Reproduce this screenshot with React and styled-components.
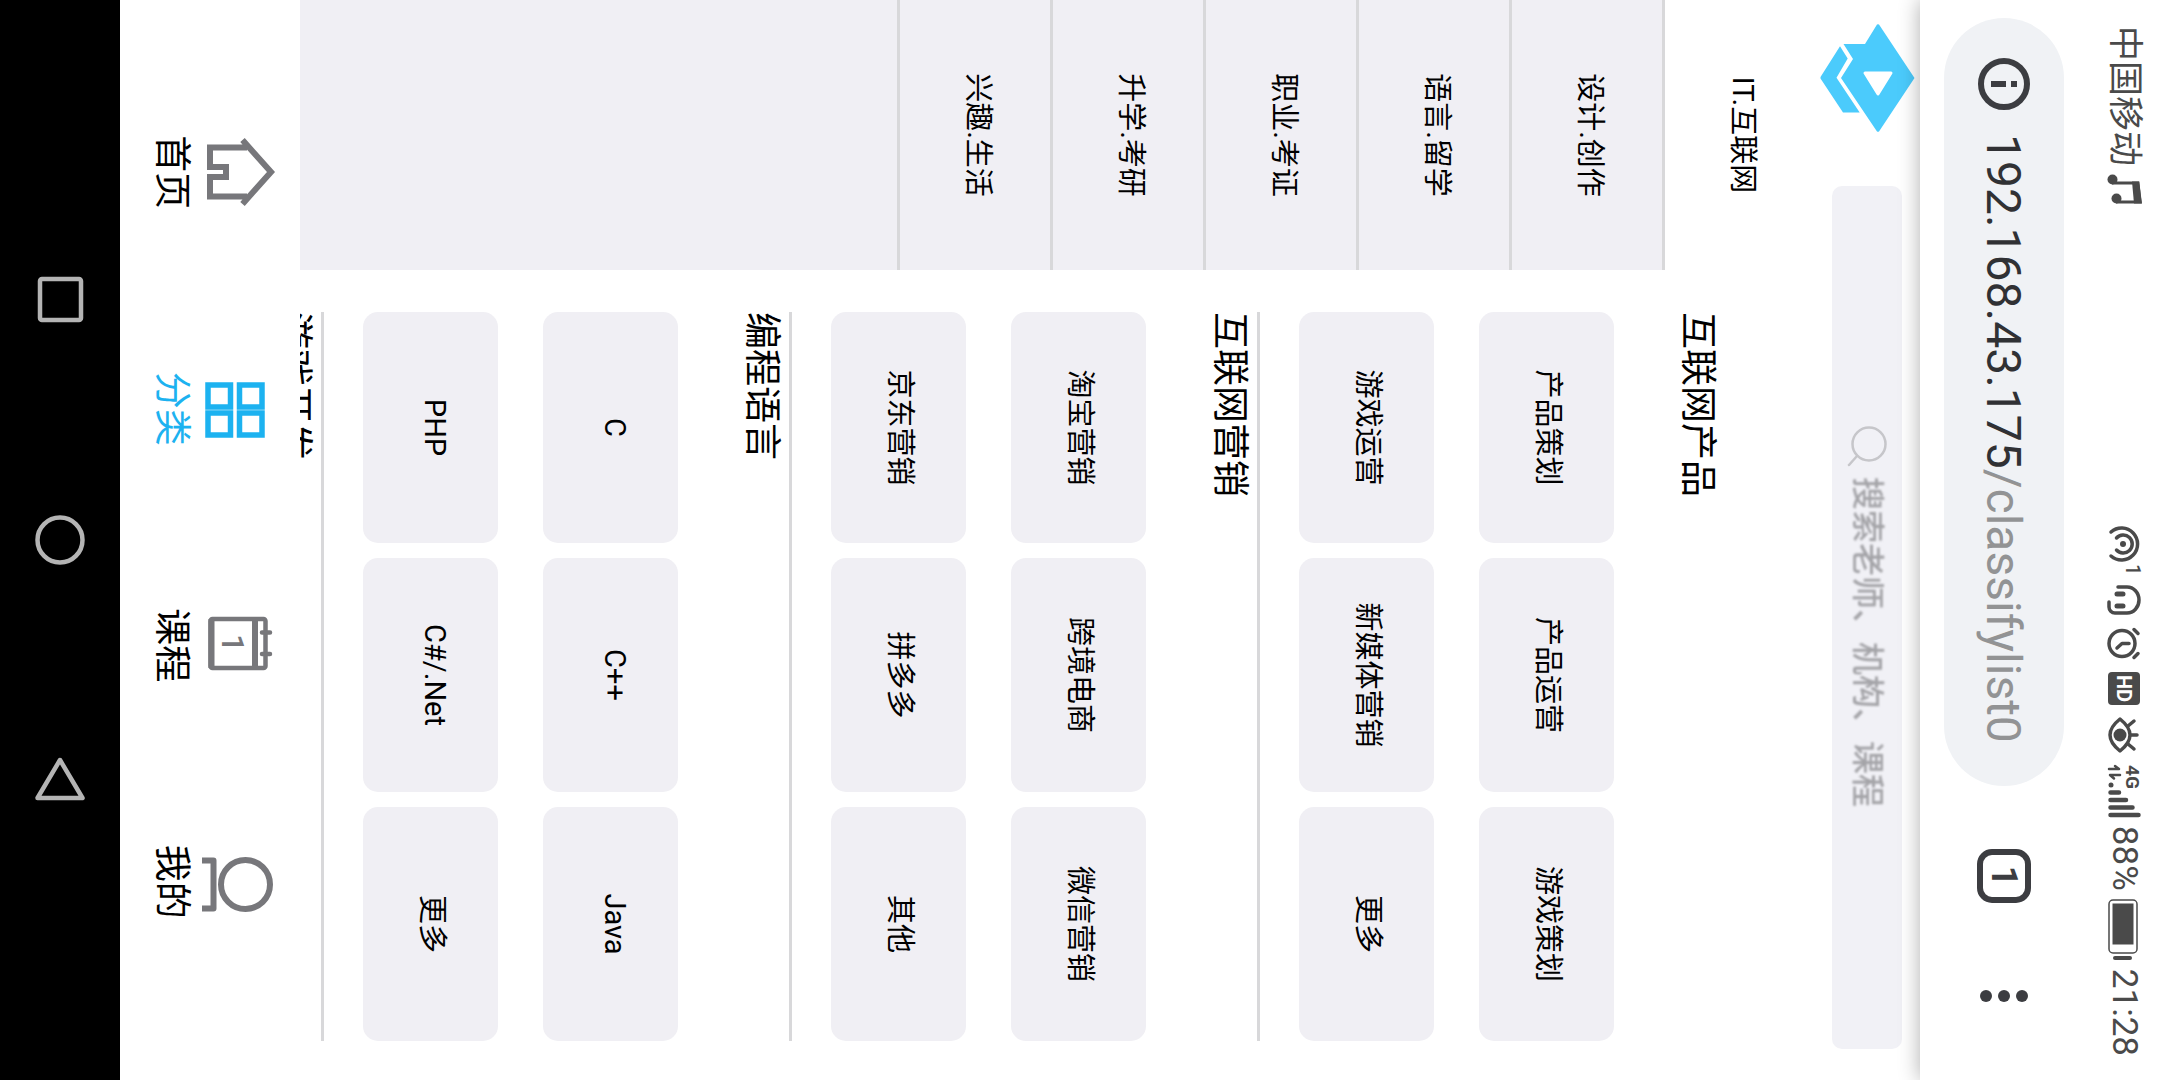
import React, { useState } from "react";
import styled, { createGlobalStyle, css } from "styled-components";

const sans = `Roboto, "Noto Sans CJK SC", sans-serif`;
const ink = "#4a4a4a";
const panel = "#f0eff4";
const line = "#d8d8da";
const accent = "#1cb2f0";

const GlobalStyle = createGlobalStyle`
  * { box-sizing: border-box; }
  body { margin: 0; background: #fff; font-family: ${sans}; color: #000; }
  button, input { font-family: inherit; color: inherit; }
  button { border: 0; padding: 0; background: none; cursor: pointer; }
  h2, ul { margin: 0; padding: 0; font-weight: 400; list-style: none; }
  svg { display: block; flex: none; overflow: visible; }
`;

/* The device lies on its side: the portrait screen is turned a quarter. */
const Viewport = styled.div`
  width: 100vw;
  height: 100vh;
  overflow: hidden;
`;

const Screen = styled.div`
  display: flex;
  flex-direction: column;
  width: 100vh;
  height: 100vw;
  transform-origin: top left;
  transform: translateX(100vw) rotate(90deg);
`;

const BrowserTop = styled.header`
  position: relative;
  z-index: 1;
  flex: none;
  background: #fff;
  box-shadow: 0 0 20px rgba(0, 0, 0, 0.32);
`;

const StatusBar = styled.div`
  display: flex;
  align-items: center;
  justify-content: space-between;
  height: 72px;
  padding: 0 24px 0 26px;
  font-size: 35px;
  line-height: 36px;
  color: ${ink};
`;

const StatusGroup = styled.div`
  display: flex;
  align-items: center;
  gap: ${(p) => p.$gap}px;
`;

const Toolbar = styled.div`
  display: flex;
  align-items: center;
  height: 168px;
  padding: 24px 24px 24px 18px;
`;

const AddressBar = styled.button`
  display: flex;
  flex: 1;
  align-items: center;
  gap: 24px;
  height: 120px;
  margin-right: 30px;
  padding-left: 40px;
  border-radius: 60px;
  background: #f0f2f5;
  font-size: 48px;
  color: #303134;
  white-space: nowrap;
`;

const Path = styled.span`
  color: #929394;
`;

const ToolButton = styled.button`
  display: grid;
  place-items: center;
  width: 120px;
  height: 120px;
`;

const TabCount = styled.span`
  display: grid;
  place-items: center;
  width: 54px;
  height: 54px;
  border: 6px solid #3c3d41;
  border-radius: 15px;
  font-size: 36px;
  font-weight: 700;
  line-height: 36px;
  color: #3c3d41;
`;

const PageHeader = styled.div`
  display: flex;
  flex: none;
  align-items: center;
  gap: 54px;
  height: 105px;
  padding: 0 31px 0 24px;
`;

const SearchBox = styled.label`
  display: flex;
  flex: 1;
  align-items: center;
  gap: 10px;
  height: 70px;
  padding-left: 239px;
  border-radius: 10px;
  background: #f1f1f6;
`;

const SearchInput = styled.input`
  flex: 1;
  min-width: 0;
  border: 0;
  padding: 0;
  outline: 0;
  background: none;
  font-size: 33px;
  filter: blur(1px);
  &::placeholder { color: #a4a4a8; opacity: 1; font-weight: 500; }
`;

const Main = styled.main`
  display: flex;
  flex: 1;
  min-height: 0;
  overflow: hidden;
`;

const Sidebar = styled.nav`
  display: flex;
  flex: none;
  flex-direction: column;
  width: 25%;
  background: ${panel};
`;

const SidebarItem = styled.button`
  height: 153px;
  padding-bottom: 12px;
  border-bottom: 3px solid ${line};
  background: ${(p) => (p.$active ? "#fff" : "transparent")};
  font-size: 29px;
`;

const Sections = styled.div`
  flex: 1;
  padding: 90px 39px 0 42px;
`;

const Section = styled.section`
  padding-bottom: 39px;
  border-bottom: 3px solid ${line};
`;

const SectionTitle = styled.h2`
  margin-bottom: 55px;
  font-size: 37px;
  line-height: 56px;
`;

const CardGrid = styled.div`
  display: grid;
  grid-template-columns: 231fr 234fr 234fr;
  gap: 45px 15px;
`;

const Card = styled.button`
  height: 135px;
  padding-bottom: 10px;
  border-radius: 15px;
  background: ${panel};
  font-size: 29px;
`;

const TabBar = styled.nav`
  display: flex;
  flex: none;
  height: 180px;
  padding: 20px 80px 0 54px;
  background: #fff;
`;

const TabLink = styled.a`
  display: flex;
  flex: 1;
  flex-direction: column;
  align-items: center;
  gap: 9px;
  font-size: 37px;
  line-height: 40px;
  text-decoration: none;
  color: #000;
  svg { color: #77777b; }
  ${(p) => p.$active && css`
    color: ${accent};
    svg { color: ${accent}; }
  `}
`;

const SystemBar = styled.div`
  display: flex;
  flex: none;
  justify-content: center;
  height: 120px;
  background: #000;
`;

const SystemButton = styled.button`
  display: grid;
  place-items: center;
  width: 240px;
  color: #b4b4b4;
`;

const Svg = ({ w, h, sw = 4, children }) => (
  <svg width={w} height={h} viewBox={`0 0 ${w} ${h}`} fill="none" stroke="currentColor"
    strokeWidth={sw} strokeLinecap="round" strokeLinejoin="round" aria-hidden="true">
    {children}
  </svg>
);

const Note = () => (
  <Svg w={30} h={36}>
    <path d="M9 30V4L28 2V26" strokeWidth="3" strokeLinejoin="miter" strokeLinecap="butt" />
    <path d="M7.500 3L29.500 0V8L7.500 10Z" fill="currentColor" stroke="none" />
    <circle cx="5.500" cy="29.500" r="5" fill="currentColor" stroke="none" />
    <circle cx="24.500" cy="25.500" r="5" fill="currentColor" stroke="none" />
  </Svg>
);

const Hotspot = () => (
  <Svg w={46} h={36} sw={3.5}>
    <circle cx="17" cy="19" r="3" fill="currentColor" stroke="none" />
    <path d="M11 25.500A9 9 0 1 1 23 25.500" />
    <path d="M5 31A16 16 0 1 1 29 31" />
    <text x="37" y="16" fill="currentColor" stroke="none" fontSize="20" fontWeight="500">1</text>
  </Svg>
);

const Headset = () => (
  <Svg w={30} h={36} sw={3.5}>
    <path d="M2 24V15A13 12 0 0 1 28 15V27A6 6 0 0 1 22 33H17" />
    <path d="M9 19V25M21 19V25" strokeWidth="5" />
  </Svg>
);

const Alarm = () => (
  <Svg w={33} h={36} sw={3.5}>
    <circle cx="16.500" cy="20" r="13" />
    <path d="M16.500 13V20L21 25M2.500 8L6.500 4M30.500 8L26.500 4" />
  </Svg>
);

const Hd = () => (
  <Svg w={33} h={36}>
    <rect y="2" width="33" height="32" rx="4" fill="currentColor" stroke="none" />
    <text x="16.500" y="25" textAnchor="middle" fill="#fff" stroke="none" fontSize="20" fontWeight="700">HD</text>
  </Svg>
);

const Eye = () => (
  <Svg w={36} h={36} sw={3.5}>
    <path d="M2 22Q18 2 34 22Q18 42 2 22Z" />
    <circle cx="18" cy="22" r="6.500" fill="currentColor" stroke="none" />
    <path d="M18 11V5M9 14L4 8M27 14L32 8" />
  </Svg>
);

const Signal = () => (
  <Svg w={53} h={36} sw={4.5}>
    <circle cx="20" cy="31" r="2.500" fill="currentColor" stroke="none" />
    <path d="M27.500 23V31.500M35 16V31.500M42.500 9.500V31.500M50 3.500V31.500" />
    <path d="M4 33V23L1 27M10 22V32L13.500 28" strokeWidth="2.500" />
    <text x="0" y="16" fill="currentColor" stroke="none" fontSize="19" fontWeight="700" fontFamily="'Liberation Sans Narrow', Roboto, sans-serif">4G</text>
  </Svg>
);

const Battery = () => (
  <Svg w={62} h={36}>
    <rect x="1" y="5" width="53" height="28" rx="4" strokeWidth="1.500" />
    <rect x="4.500" y="8.500" width="41" height="21" fill="currentColor" stroke="none" />
    <path d="M59 12V27" strokeWidth="4" />
  </Svg>
);

const Info = () => (
  <Svg w={52} h={52} sw={6}>
    <circle cx="26" cy="26" r="23" stroke="#3c3d41" />
    <path d="M23 13h6v6h-6zM23 24h6v15h-6z" fill="#3c3d41" stroke="none" />
  </Svg>
);

const Dots = () => (
  <svg width="12" height="48" viewBox="0 0 12 48" fill="#3c3d41" aria-hidden="true">
    <circle cx="6" cy="6" r="6" />
    <circle cx="6" cy="24" r="6" />
    <circle cx="6" cy="42" r="6" />
  </svg>
);

const Logo = () => (
  <svg width="108" height="95" viewBox="0 0 108 95" fill="#4bcbfc" role="img" aria-label="logo">
    <path d="M54 0.500L107.500 36Q108 37 107.500 38L54 74L35 62L20 71.500V50L0.500 38Q0 37 0.500 36Z" />
    <path d="M22.300 75L34.500 67.300L53.700 78.500L88.500 55.300V72L54.500 94.500H53Z" />
    <path d="M49 24V50L70 37Z" fill="#fff" stroke="#fff" strokeWidth="3" strokeLinejoin="round" />
  </svg>
);

const Magnifier = () => (
  <Svg w={42} h={40} sw={2.5}>
    <g stroke="#c6c6ca">
      <circle cx="19" cy="18" r="16.500" />
      <path d="M31 30L40 38" />
    </g>
  </Svg>
);

const Home = () => (
  <Svg w={80} h={80} sw={6}>
    <path d="M8 37.500L40 9L72 37.500M15.500 33V70H35V54H45V70H64.500V33" strokeLinecap="butt" strokeLinejoin="miter" />
  </Svg>
);

const GridIcon = () => (
  <Svg w={80} h={80} sw={5.5}>
    <g strokeLinejoin="miter">
      <rect x="16" y="18" width="22" height="22.500" />
      <rect x="44" y="18" width="22" height="22.500" />
      <rect x="16" y="49.500" width="22" height="22.500" />
      <rect x="44" y="49.500" width="22" height="22.500" />
    </g>
  </Svg>
);

const Calendar = () => (
  <Svg w={80} h={80} sw={4.5}>
    <rect x="14" y="14.500" width="49" height="55" rx="2" />
    <path d="M14 25H63M14 68.500H63" strokeWidth="6" strokeLinecap="butt" />
    <path d="M27.500 10V18M49 10V18" />
    <text x="38" y="58" textAnchor="middle" fill="currentColor" stroke="none" fontSize="31" fontWeight="500">1</text>
  </Svg>
);

const Person = () => (
  <Svg w={80} h={80} sw={6}>
    <circle cx="42.500" cy="34.500" r="24.500" />
    <path d="M18.500 78V66.500H66.500V78" strokeLinecap="butt" />
  </Svg>
);

const categories = ["IT.互联网", "设计.创作", "语言.留学", "职业.考证", "升学.考研", "兴趣.生活"];

const sections = [
  { title: "互联网产品", items: ["产品策划", "产品运营", "游戏策划", "游戏运营", "新媒体营销", "更多"] },
  { title: "互联网营销", items: ["淘宝营销", "跨境电商", "微信营销", "京东营销", "拼多多", "其他"] },
  { title: "编程语言", items: ["C", "C++", "Java", "PHP", "C#/.Net", "更多"] },
  { title: "游戏开发", items: [] },
];

const tabs = [
  { label: "首页", Icon: Home },
  { label: "分类", Icon: GridIcon },
  { label: "课程", Icon: Calendar },
  { label: "我的", Icon: Person },
];

export default function App() {
  const [category, setCategory] = useState(0);

  return (
    <Viewport>
      <GlobalStyle />
      <Screen>
        <BrowserTop>
          <StatusBar>
            <StatusGroup $gap={8}>
              <span>中国移动</span>
              <Note />
            </StatusGroup>
            <StatusGroup $gap={8}>
              <StatusGroup $gap={12}>
                <Hotspot />
                <Headset />
                <Alarm />
                <Hd />
                <Eye />
                <Signal />
              </StatusGroup>
              <span>88%</span>
              <Battery />
              <span>21:28</span>
            </StatusGroup>
          </StatusBar>
          <Toolbar>
            <AddressBar type="button">
              <Info />
              <span>192.168.43.175<Path>/classifylist0</Path></span>
            </AddressBar>
            <ToolButton type="button"><TabCount>1</TabCount></ToolButton>
            <ToolButton type="button" aria-label="菜单"><Dots /></ToolButton>
          </Toolbar>
        </BrowserTop>

        <PageHeader>
          <Logo />
          <SearchBox>
            <Magnifier />
            <SearchInput type="text" aria-label="搜索" placeholder="搜索老师、机构、课程" />
          </SearchBox>
        </PageHeader>

        <Main>
          <Sidebar>
            {categories.map((name, i) => (
              <SidebarItem key={name} type="button" $active={i === category} onClick={() => setCategory(i)}>
                {name}
              </SidebarItem>
            ))}
          </Sidebar>
          <Sections>
            {sections.map(({ title, items }) => (
              <Section key={title}>
                <SectionTitle>{title}</SectionTitle>
                <CardGrid>
                  {items.map((item) => <Card key={item} type="button">{item}</Card>)}
                </CardGrid>
              </Section>
            ))}
          </Sections>
        </Main>

        <TabBar>
          {tabs.map(({ label, Icon }, i) => (
            <TabLink key={label} href="#" $active={i === 1}>
              <Icon />
              {label}
            </TabLink>
          ))}
        </TabBar>

        <SystemBar>
          <SystemButton type="button" aria-label="最近任务">
            <Svg w={50} h={50} sw={4.5}><rect x="4" y="4" width="41" height="41" rx="2" /></Svg>
          </SystemButton>
          <SystemButton type="button" aria-label="主屏幕">
            <Svg w={50} h={50} sw={4.5}><circle cx="25" cy="25" r="22.500" /></Svg>
          </SystemButton>
          <SystemButton type="button" aria-label="返回">
            <Svg w={50} h={50} sw={4.5}><path d="M5 25L43 2.500V47.500Z" /></Svg>
          </SystemButton>
        </SystemBar>
      </Screen>
    </Viewport>
  );
}
